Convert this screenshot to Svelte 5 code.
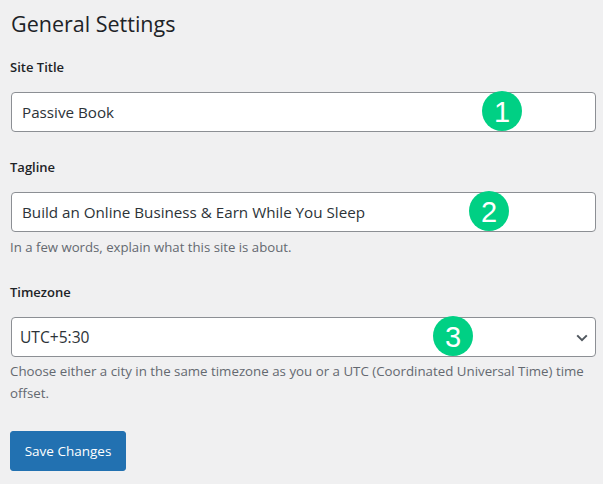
<script>
  const fields = [
    { label: 'Site Title', value: 'Passive Book', badge: 1 },
    { label: 'Tagline', value: 'Build an Online Business & Earn While You Sleep', badge: 2, hint: 'In a few words, explain what this site is about.' }
  ];
</script>

<main class="page">
  <h1>General Settings</h1>
  {#each fields as f}
    <section class="field" class:hinted={f.hint}>
      <span class="label">{f.label}</span>
      <div class="control">
        <span class="value">{f.value}</span>
        <span class="badge b{f.badge}">{f.badge}</span>
      </div>
      {#if f.hint}<p class="hint">{f.hint}</p>{/if}
    </section>
  {/each}
  <section class="field tz">
    <span class="label">Timezone</span>
    <div class="control select">
      <span class="value">UTC+5:30</span>
      <span class="badge b3">3</span>
      <svg class="chev" width="12" height="8" viewBox="0 0 12 8"><path d="M1.2 1.4 6 6.2l4.8-4.8" fill="none" stroke="#50575e" stroke-width="2"/></svg>
    </div>
    <p class="hint tight">Choose either a city in the same timezone as you or a UTC (Coordinated Universal Time) time offset.</p>
  </section>
  <button>Save Changes</button>
</main>

<style>
  :global(body) { margin: 0; background: #f0f0f1; }
  .page {
    box-sizing: border-box; width: 603px; height: 484px; overflow: hidden;
    padding: 8px 7px 0 10px;
    font-family: "Open Sans", "Noto Sans", sans-serif; color: #1d2327;
  }
  h1 { margin: 0 0 0 1px; font-size: 21.5px; line-height: 32px; font-weight: 400; }
  .field { margin-top: 17px; }
  .field + .field { margin-top: 25px; }
  .field.tz { margin-top: 24px; }
  .label { display: block; font-size: 13px; font-weight: 600; line-height: 20px; }
  .control {
    position: relative; box-sizing: border-box; height: 40px; margin: 15px 0 0 1px; width: 585px;
    display: flex; align-items: center; padding-left: 10px;
    background: #fff; border: 1px solid #8c8f94; border-radius: 4px;
    font-size: 15.2px; color: #2c3338;
  }
  .select { padding-left: 8px; font-size: 15.6px; }
  .value { white-space: nowrap; }
  .badge {
    position: absolute; top: -2px; width: 40px; height: 40px; border-radius: 50%; box-sizing: border-box; padding-top: 2px;
    background: #00d084; color: #fff; display: flex; align-items: center; justify-content: center;
    font: 29px/1 "Liberation Sans", Arial, sans-serif;
  }
  .b1 { left: 470px; }
  .b2 { left: 457px; }
  .b3 { left: 421px; }
  .chev { position: absolute; right: 7px; top: 16px; }
  .hint { margin: 5px 0 0; font-size: 13.2px; line-height: 21px; color: #646970; }
  .tight { margin-top: 3px; line-height: 22px; font-size: 13.3px; }
  button {
    display: block; box-sizing: border-box; margin-top: 27px; width: 116px; height: 40px; padding: 0;
    background: #2271b1; border: 1px solid #2271b1; border-radius: 3px; color: #fff;
    font: 13.5px "Open Sans", sans-serif;
  }
</style>
